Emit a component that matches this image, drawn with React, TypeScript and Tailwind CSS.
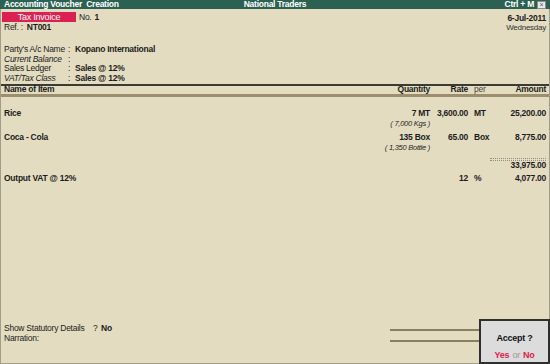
import React from "react";

const F = { fontFamily: '"Liberation Sans", Arial, sans-serif' };

export default function App() {
  return (
    <div
      className="relative flex h-[364px] w-[550px] flex-col overflow-hidden whitespace-nowrap bg-[#e4dcc1] text-[8.5px] leading-none tracking-[-0.25px] text-[#1c1c1c]"
      style={F}
    >
      {/* Title bar */}
      <div className="relative flex h-[9px] items-center bg-[#2b6153] px-[4px] text-[8.5px] font-bold text-white">
        <span className="whitespace-pre">Accounting Voucher  Creation</span>
        <span className="absolute left-1/2 -translate-x-1/2">National Traders</span>
        <span className="ml-auto mr-[3px]">Ctrl + M</span>
        <span className="flex h-[8px] w-[9px] items-center justify-center border border-[#8a8a8a] bg-[#e8e8e8] text-[7px] font-normal leading-none text-[#555]">
          ×
        </span>
      </div>

      <div className="flex flex-1 flex-col border-x border-b border-[#a29c88]">
        {/* Header info */}
        <div className="flex justify-between pr-[3px]">
          <div className="flex flex-col pl-[1px] pt-[3px]">
            <div className="flex h-[10px] items-center">
              <div className="flex h-[10px] w-[74px] items-center justify-center bg-[#da2152] text-[9px] text-white">
                Tax Invoice
              </div>
              <span className="ml-[3px]">No.</span>
              <span className="ml-[3px] font-bold">1</span>
            </div>
            <div className="flex h-[10px] items-center pl-[2px]">
              <span>Ref. :</span>
              <span className="ml-[4px] font-bold">NT001</span>
            </div>
          </div>
          <div className="flex flex-col items-end pt-[4px]">
            <div className="flex h-[10px] items-center font-bold">6-Jul-2011</div>
            <div className="flex h-[9px] items-center text-[8px] text-[#333]">Wednesday</div>
          </div>
        </div>

        {/* Party block */}
        <div className="mt-[13px] flex flex-col pl-[3px]">
          {[
            ["Party's A/c Name", "Kopano International", false],
            ["Current Balance", "", true],
            ["Sales Ledger", "Sales @ 12%", false],
            ["VAT/Tax Class", "Sales @ 12%", true],
          ].map(([l, v, it], i) => (
            <div key={i} className="flex h-[9.4px] items-center">
              <span className={`w-[64px] ${it ? "italic" : ""}`}>{l as string}</span>
              <span className="w-[7px]">:</span>
              <span className="font-bold">{v as string}</span>
            </div>
          ))}
        </div>

        {/* Table header */}
        <div className="mt-[1px] flex h-[13px] items-center border-t-2 border-b-[3px] border-t-[#3b3b33] border-b-[#9b8f6e] font-bold">
          <div className="flex-1 pl-[3px]">Name of Item</div>
          <div className="w-[60px] text-right">Quantity</div>
          <div className="w-[38px] text-right">Rate</div>
          <div className="w-[36px] pl-[6px] font-normal text-[#444]">per</div>
          <div className="w-[42px] text-right">Amount</div>
          <div className="w-[3px]" />
        </div>

        {/* Items */}
        <div className="flex flex-col pt-[12px]">
          <div className="flex h-[10px] items-center font-bold">
            <div className="flex-1 pl-[3px]">Rice</div>
            <div className="w-[60px] text-right">7 MT</div>
            <div className="w-[38px] text-right">3,600.00</div>
            <div className="w-[36px] pl-[6px]">MT</div>
            <div className="w-[42px] text-right">25,200.00</div>
            <div className="w-[3px]" />
          </div>
          <div className="flex h-[10px] items-center">
            <div className="flex-1" />
            <div className="w-[60px] text-right text-[7.5px] italic">( 7,000 Kgs )</div>
            <div className="w-[119px]" />
          </div>
          <div className="mt-[4px] flex h-[10px] items-center font-bold">
            <div className="flex-1 pl-[3px]">Coca - Cola</div>
            <div className="w-[60px] text-right">135 Box</div>
            <div className="w-[38px] text-right">65.00</div>
            <div className="w-[36px] pl-[6px]">Box</div>
            <div className="w-[42px] text-right">8,775.00</div>
            <div className="w-[3px]" />
          </div>
          <div className="flex h-[10px] items-center">
            <div className="flex-1" />
            <div className="w-[60px] text-right text-[7.5px] italic">( 1,350 Bottle )</div>
            <div className="w-[119px]" />
          </div>
          <div className="mt-[5px] flex justify-end pr-[3px]">
            <div className="h-[3px] w-[56px] border-y border-dotted border-[#8f8f86]" />
          </div>
          <div className="flex h-[9px] items-center justify-end pr-[3px] font-bold">33,975.00</div>
          <div className="mt-[4px] flex h-[10px] items-center font-bold">
            <div className="flex-1 pl-[3px]">Output VAT @ 12%</div>
            <div className="w-[60px]" />
            <div className="w-[38px] text-right">12</div>
            <div className="w-[36px] pl-[6px]">%</div>
            <div className="w-[42px] text-right">4,077.00</div>
            <div className="w-[3px]" />
          </div>
        </div>

        {/* Footer */}
        <div className="mt-auto mb-[20px] flex items-end">
          <div className="flex flex-col pl-[3px]">
            <div className="flex h-[10px] items-center">
              <span className="w-[89px]">Show Statutory Details</span>
              <span className="w-[8px]">?</span>
              <span className="font-bold">No</span>
            </div>
            <div className="flex h-[10px] items-center">Narration:</div>
          </div>
          <div className="ml-auto mr-[70px] mb-[1px] flex w-[89px] flex-col">
            <div className="h-[2px] bg-[#8a7f60]" />
            <div className="mt-[9px] h-[2px] bg-[#8a7f60]" />
          </div>
        </div>
      </div>

      {/* Accept popup */}
      <div className="absolute bottom-0 right-0 flex h-[45px] w-[71px] flex-col items-center border-2 border-[#2f2f2f] bg-[#dcdcdc] font-bold">
        <div className="mt-[13px] text-[9px] text-[#111]">Accept ?</div>
        <div className="mt-auto mb-[2px] flex items-center gap-[3px] text-[9px]">
          <span className="text-[#e0204a]">Yes</span>
          <span className="font-normal text-[#999]">or</span>
          <span className="text-[#e0204a]">No</span>
        </div>
      </div>
    </div>
  );
}
